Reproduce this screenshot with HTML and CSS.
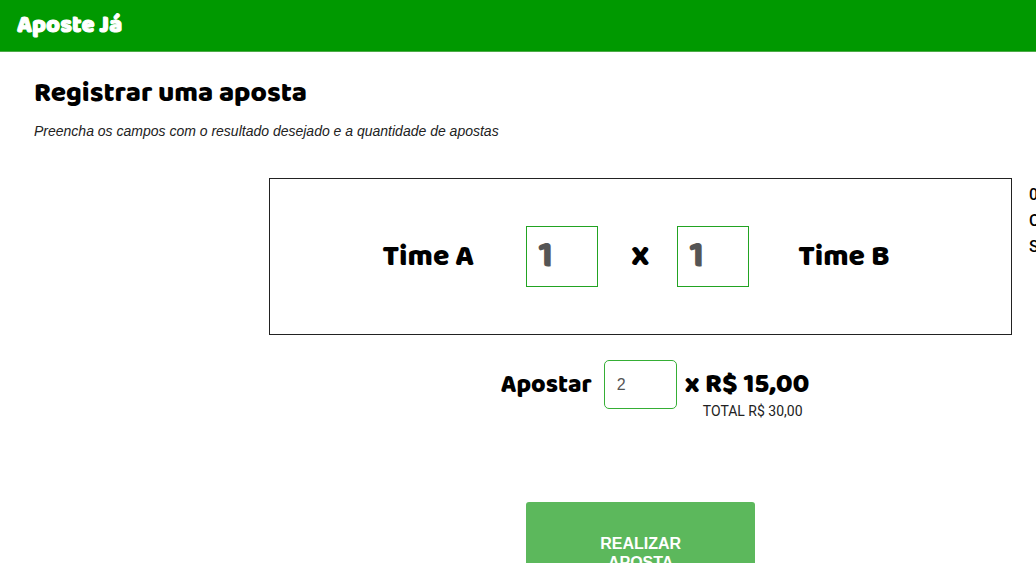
FILE: index.html
```html
<!DOCTYPE html>
<html lang="pt-BR">
<head>
<meta charset="utf-8">
<title>Aposte Já</title>
<link rel="stylesheet" href="styles.css">
</head>
<body>
<header class="topbar"><a class="brand" href="#">Aposte Já</a></header>
<main>
  <section class="intro">
    <h1 class="title">Registrar uma aposta</h1>
    <p class="subtitle">Preencha os campos com o resultado desejado e a quantidade de apostas</p>
  </section>
  <div class="layout">
    <form class="bet">
      <div class="match">
        <label class="team home" for="goals-a">Time A</label>
        <input class="goals" id="goals-a" type="text" inputmode="numeric" value="1">
        <span class="versus">X</span>
        <input class="goals" id="goals-b" type="text" inputmode="numeric" value="1">
        <label class="team away" for="goals-b">Time B</label>
      </div>
      <div class="stake">
        <label class="stake-label" for="quantity">Apostar</label>
        <input class="quantity" id="quantity" type="text" inputmode="numeric" value="2">
        <span class="price">x R$ 15,00</span>
      </div>
      <p class="total">TOTAL R$ 30,00</p>
      <button class="submit" type="submit">REALIZAR APOSTA</button>
    </form>
    <aside class="details">
      <span>0</span>
      <span>C</span>
      <span>S</span>
    </aside>
  </div>
</main>
</body>
</html>
```
FILE: styles.css
```css
* { box-sizing: border-box; }

body {
  margin: 0;
  height: 100vh;
  overflow: hidden;
  background: #fff;
  color: #000;
  font-family: "Liberation Sans", Arial, sans-serif;
}

.topbar {
  display: flex;
  align-items: center;
  height: 52px;
  padding: 0 17px;
  background: #090;
  border-bottom: 1px solid #4caa48;
}

.brand,
.title,
.team,
.versus,
.goals,
.stake-label,
.price {
  font-family: "Baloo 2", Baloo, Lato, sans-serif;
  font-weight: 800;
}

.brand {
  color: #fff;
  font-size: 24px;
  text-decoration: none;
  -webkit-text-stroke: 1px #fff;
}

.intro { padding: 26px 34px 0; }

.title {
  margin: 0;
  font-size: 28px;
  line-height: 32px;
}

.subtitle {
  margin: 12px 0 0;
  font-size: 14px;
  font-style: italic;
  line-height: 18px;
  color: #222;
}

.layout {
  display: grid;
  grid-template-columns: minmax(0, 1fr) 7px;
  column-gap: 17px;
  padding: 38px 0 0 26%;
}

.bet {
  display: flex;
  flex-direction: column;
  align-items: center;
}

.match {
  display: grid;
  grid-template-columns: 1fr 72px 79px 72px 1fr;
  align-items: center;
  align-self: stretch;
  padding: 47px 6px 47px 0;
  border: 1px solid #222;
}

.team { font-size: 30px; line-height: 32px; }
.home { padding-right: 52px; text-align: right; }
.away { padding-left: 49px; }

.versus {
  padding-left: 5px;
  font-size: 30px;
  line-height: 32px;
  text-align: center;
}

.goals {
  width: 100%;
  height: 61px;
  padding: 0 11px 2px;
  border: 1px solid #22a322;
  background: #fff;
  color: #555;
  font-size: 38px;
}

.stake {
  display: flex;
  align-items: center;
  padding: 25px 0 0 29px;
}

.stake-label { font-size: 25px; line-height: 32px; }
.price { font-size: 28px; line-height: 32px; }

.quantity {
  width: 73px;
  height: 49px;
  margin: 0 8px 0 12px;
  padding: 0 12px;
  border: 1px solid #35ae35;
  border-radius: 5px;
  background: #fff;
  color: #555;
  font-family: inherit;
  font-size: 16px;
}

.total {
  margin: -6px 0 0;
  padding-left: 224px;
  font-family: Roboto, sans-serif;
  font-size: 14px;
  line-height: 16px;
  color: #222;
}

.submit {
  width: 229px;
  margin-top: 83px;
  padding: 32px 68px;
  border: 0;
  border-radius: 3px;
  background: #5cb85c;
  color: #fff;
  font-family: inherit;
  font-size: 16px;
  font-weight: 700;
  line-height: 19px;
}

.details {
  display: flex;
  flex-direction: column;
  overflow: hidden;
  padding-top: 4px;
  font-family: Roboto, sans-serif;
  font-size: 16px;
  font-weight: 500;
  line-height: 26px;
}
```
